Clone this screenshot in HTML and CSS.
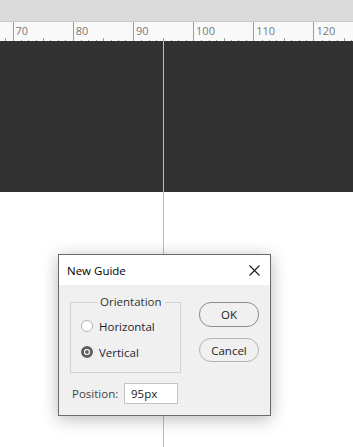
FILE: index.html
```html
<!DOCTYPE html>
<html lang="en">
<head>
<meta charset="UTF-8">
<meta name="viewport" content="width=device-width, initial-scale=1.0">
<title>New Guide</title>
<link rel="stylesheet" href="styles.css">
</head>
<body>

<!-- Top strip and ruler -->
<div class="topbar"></div>
<div class="ruler">
  <div class="ruler-track">
    <div class="seg"><span class="num"></span><i></i><i></i><i></i><i></i><i class="mid"></i><i></i><i></i><i></i></div>
    <div class="seg"><span class="num">70</span><i></i><i></i><i></i><i></i><i class="mid"></i><i></i><i></i><i></i></div>
    <div class="seg"><span class="num">80</span><i></i><i></i><i></i><i></i><i class="mid"></i><i></i><i></i><i></i></div>
    <div class="seg"><span class="num">90</span><i></i><i></i><i></i><i></i><i class="mid"></i><i></i><i></i><i></i></div>
    <div class="seg"><span class="num">100</span><i></i><i></i><i></i><i></i><i class="mid"></i><i></i><i></i><i></i></div>
    <div class="seg"><span class="num">110</span><i></i><i></i><i></i><i></i><i class="mid"></i><i></i><i></i><i></i></div>
    <div class="seg"><span class="num">120</span><i></i><i></i><i></i><i></i><i class="mid"></i><i></i><i></i><i></i></div>
  </div>
</div>

<!-- Document canvas -->
<div class="canvas"></div>
<div class="paper"></div>

<!-- Guide line -->
<div class="guide"></div>

<!-- Dialog -->
<div class="dialog">
  <div class="titlebar">
    <span class="title">New Guide</span>
    <svg class="close" width="11" height="11" viewBox="0 0 11 11">
      <path d="M0.5 0.5 L10.5 10.5 M10.5 0.5 L0.5 10.5" stroke="#1a1a1a" stroke-width="1.1" fill="none"/>
    </svg>
  </div>
  <div class="dialog-body">
    <div class="top-row">
      <fieldset class="orientation">
        <legend>Orientation</legend>
        <label class="option"><span class="radio"></span>Horizontal</label>
        <label class="option"><span class="radio checked"></span>Vertical</label>
      </fieldset>
      <div class="buttons">
        <button class="btn btn-default">OK</button>
        <button class="btn">Cancel</button>
      </div>
    </div>
    <div class="position-row">
      <span class="pos-label">Position:</span>
      <div class="pos-input">95px</div>
    </div>
  </div>
</div>

</body>
</html>
```

FILE: styles.css
```css
body {
  margin: 0;
  padding: 0;
  width: 353px;
  height: 447px;
  overflow: hidden;
  position: relative;
  background: #fff;
  font-family: "Open Sans", "Noto Sans", Arial, sans-serif;
}
.topbar {
  height: 21px;
  background: #dadada;
  border-bottom: 1px solid #c8c8c8;
}
.ruler {
  height: 19px;
  background: #f9f9f9;
  overflow: hidden;
}
.ruler-track {
  display: flex;
  margin-left: -47.7px;
  height: 100%;
}
.seg {
  flex: 0 0 60.2px;
  box-sizing: border-box;
  border-left: 1px solid #9a9a9a;
  display: grid;
  grid-template-columns: repeat(8, 1fr);
  grid-template-rows: 1fr auto;
  align-items: end;
}
.num {
  grid-column: 1 / -1;
  grid-row: 1;
  align-self: start;
  padding: 2px 0 0 2px;
  font-size: 11px;
  line-height: 14px;
  color: #7a7a7a;
}
.seg i {
  grid-row: 2;
  height: 3px;
  border-left: 1px solid #9a9a9a;
}
.seg i:first-of-type {
  border-left: none;
}
.seg i.mid {
  height: 5px;
}
.canvas {
  height: 151px;
  background: #323232;
}
.guide {
  position: absolute;
  left: 163px;
  top: 41px;
  bottom: 0;
  width: 1px;
  background: #4aeef0;
}
.dialog {
  position: absolute;
  left: 58px;
  top: 254px;
  width: 213px;
  height: 162px;
  box-sizing: border-box;
  border: 1px solid #6a6a6a;
  background: #f0f0f0;
  box-shadow: 0 3px 16px rgba(0, 0, 0, 0.28);
  font-size: 11.5px;
  color: #222;
}
.titlebar {
  height: 30px;
  background: #fff;
  display: flex;
  align-items: center;
  justify-content: space-between;
  padding: 0 10px 0 8px;
}
.title {
  color: #000;
  font-size: 11.5px;
}
.dialog-body {
  padding: 9px 11px 0 11px;
}
.top-row {
  display: flex;
  justify-content: space-between;
}
.orientation {
  margin: 0;
  width: 111px;
  height: 79px;
  box-sizing: border-box;
  border: 1px solid #d2d2d2;
  padding: 3px 0 0 10px;
}
.orientation legend {
  margin-left: 16px;
  padding: 0 3px;
  color: #333;
  line-height: 16px;
}
.option {
  display: flex;
  align-items: center;
  gap: 6px;
  height: 26px;
  color: #1e1e2e;
}
.radio {
  width: 12px;
  height: 12px;
  box-sizing: border-box;
  border-radius: 50%;
  border: 1px solid #b4b4b4;
  background: #fff;
}
.radio.checked {
  border: 3px solid #606060;
  background: radial-gradient(circle, #606060 0 1.5px, #fff 2px);
}
.buttons {
  display: flex;
  flex-direction: column;
  gap: 11px;
  padding-top: 8px;
}
.btn {
  width: 60px;
  height: 24px;
  border: 1px solid #b4b4b4;
  border-radius: 12px;
  background: #f0f0f0;
  font-family: inherit;
  font-size: 11.5px;
  color: #222;
  padding: 0;
}
.btn-default {
  height: 25px;
  border-color: #8c8c8c;
}
.position-row {
  display: flex;
  align-items: center;
  margin-top: 10px;
  padding-left: 2px;
}
.pos-label {
  width: 52px;
  color: #444;
}
.pos-input {
  width: 54px;
  height: 21px;
  box-sizing: border-box;
  border: 1px solid #c4c4c4;
  background: #fff;
  padding-left: 6px;
  line-height: 19px;
  color: #222;
}
```
